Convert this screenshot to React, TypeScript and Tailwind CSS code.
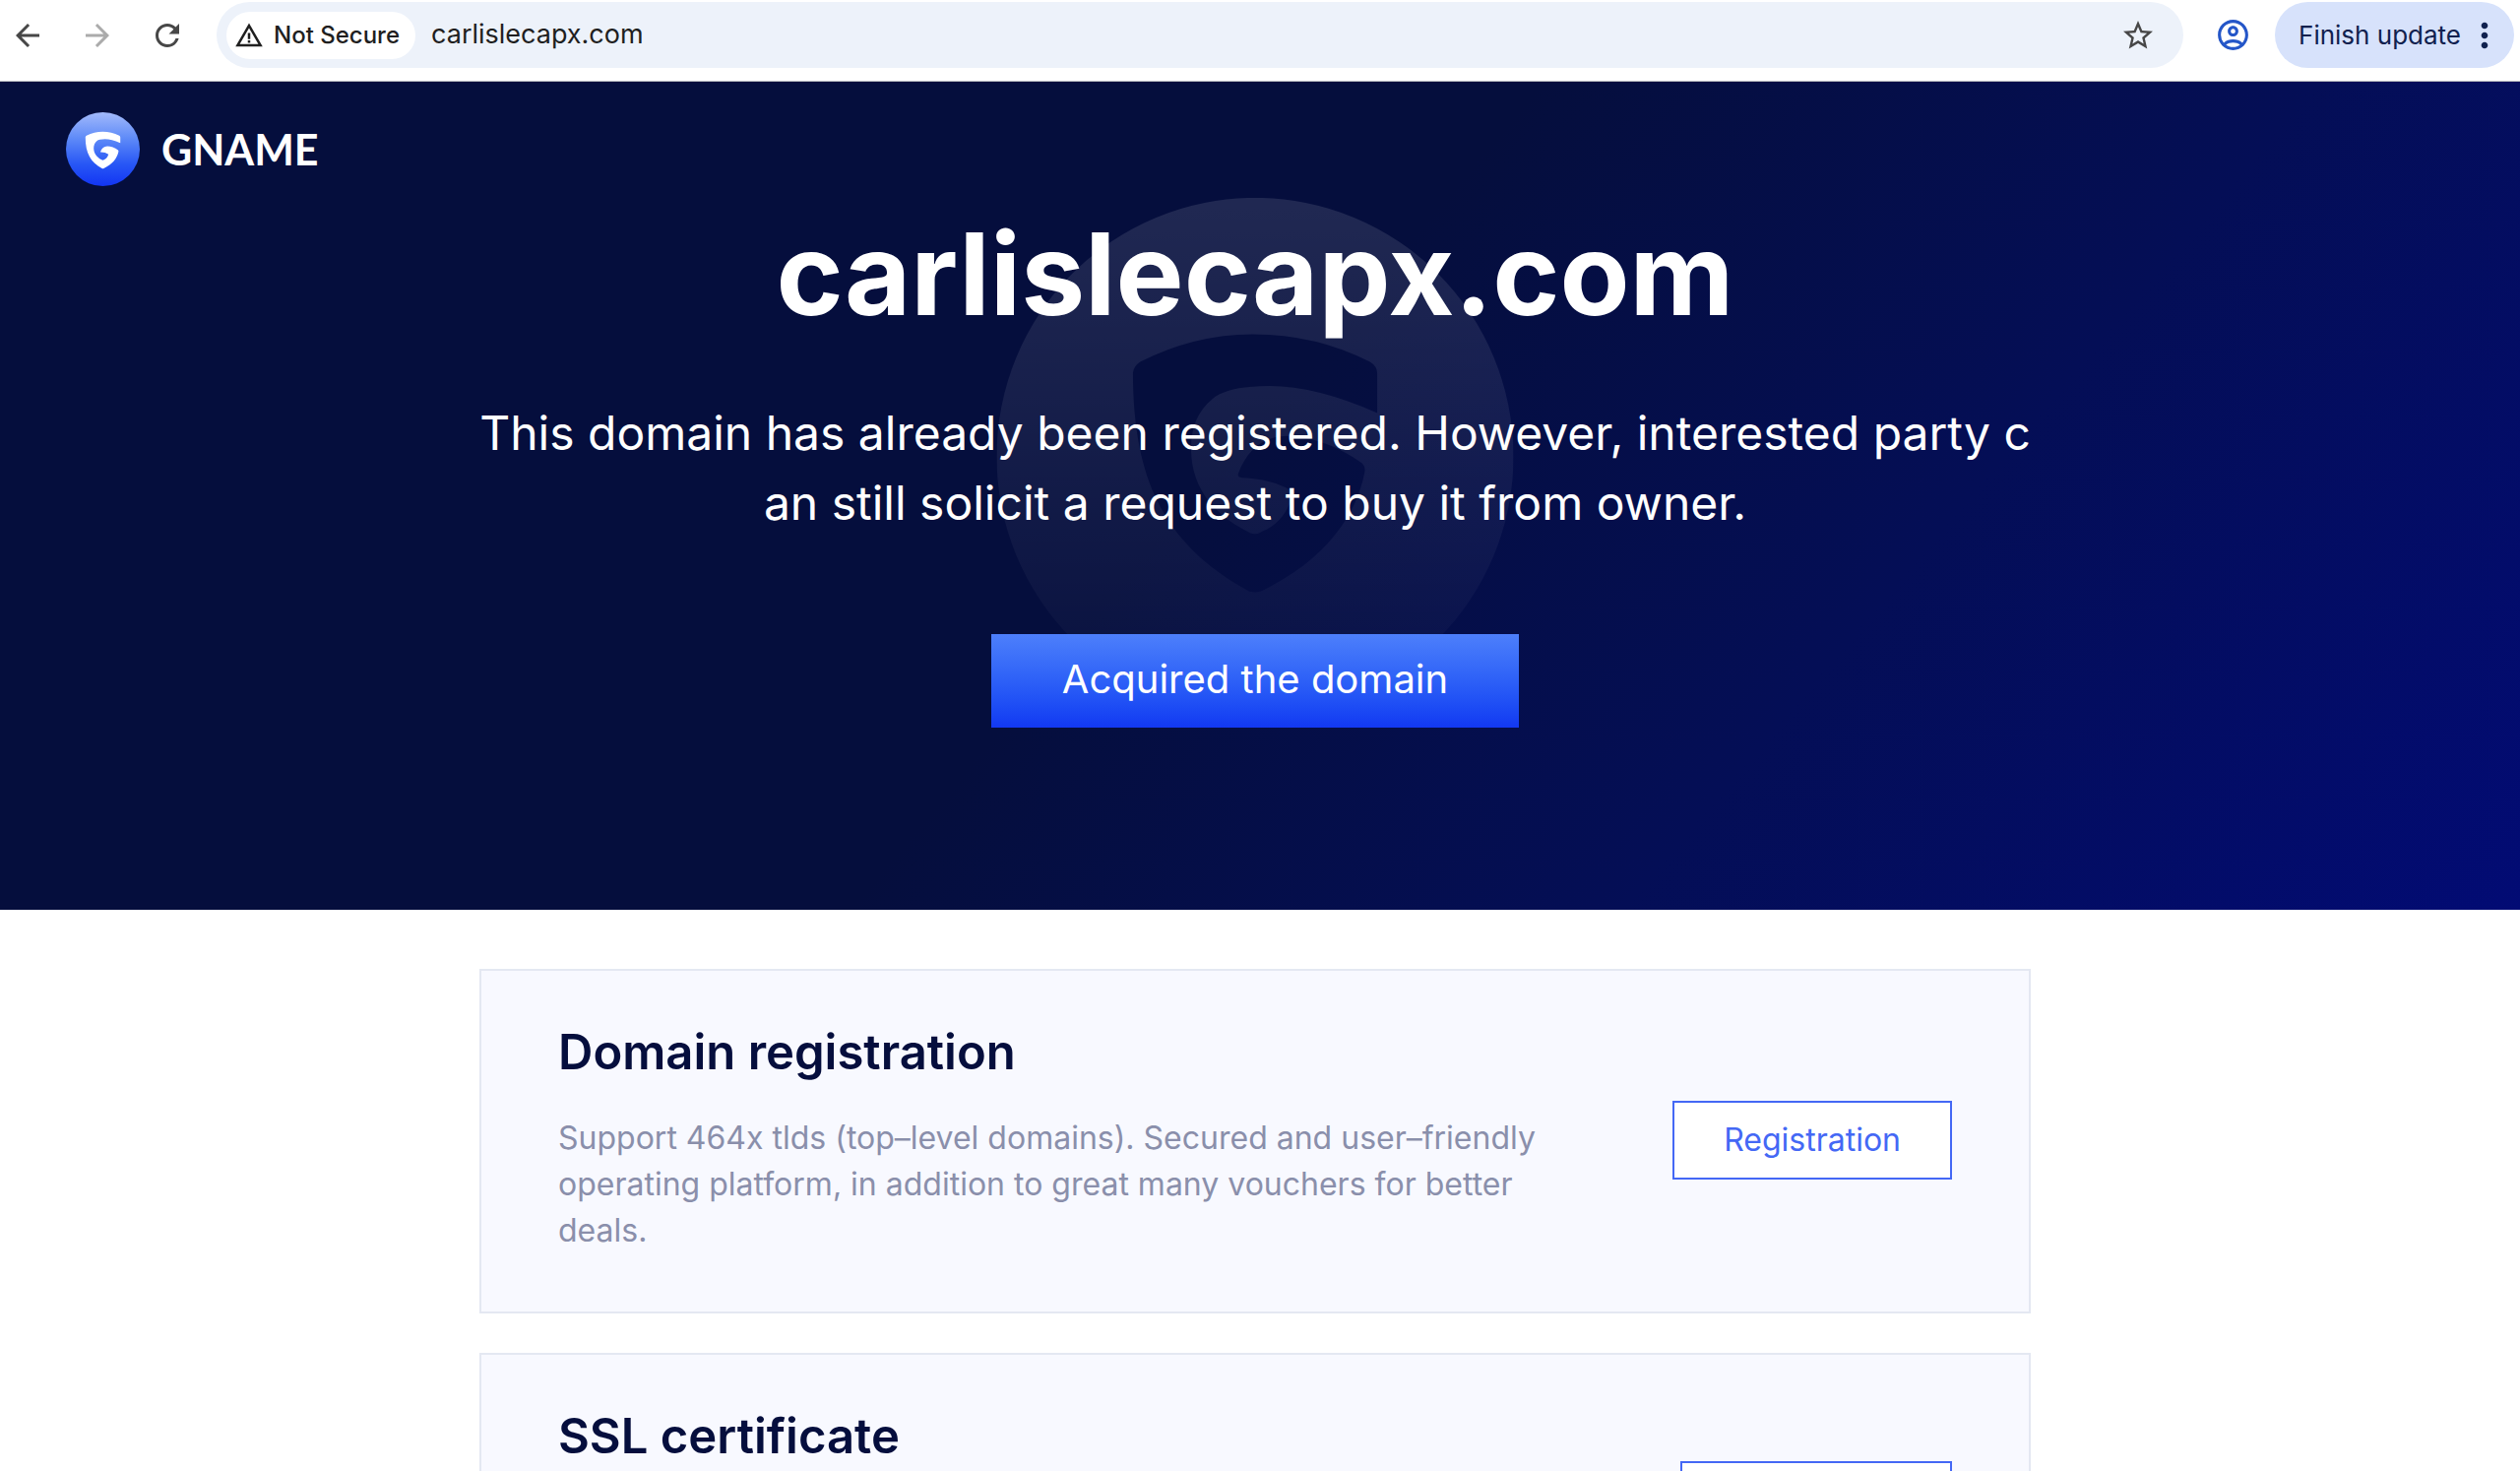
import { useId, useState } from "react";
import {
  MdArrowBack,
  MdArrowForward,
  MdMoreVert,
  MdOutlineAccountCircle,
  MdRefresh,
  MdStarBorder,
  MdWarningAmber,
} from "react-icons/md";

const DOMAIN = "carlislecapx.com";

const SERVICES = [
  {
    title: "Domain registration",
    text: "Support 464x tlds (top–level domains). Secured and user–friendly operating platform, in addition to great many vouchers for better deals.",
    action: "Registration",
  },
  {
    title: "SSL certificate",
    text: "Protect your website with trusted certificates and keep the data of your visitors encrypted.",
    action: "Certificate",
  },
];

const SHIELD =
  "M475 532Q640 448 820 448Q1010 448 1175 532Q1197 545 1197 568L1197 688Q1010 606 870 606Q740 606 695 645Q628 700 630 800C632 900 680 985 800 1048Q825 1064 848 1048C890 1030 920 1000 945 930Q880 888 785 885Q770 883 774 872C800 800 850 760 920 758C1000 760 1080 790 1150 840Q1163 852 1158 872C1130 1010 1030 1140 845 1230Q825 1238 805 1230C570 1100 453 920 453 565Q455 545 475 532Z";

function LogoMark() {
  const id = useId();

  return (
    <svg viewBox="38 33 1574 1574" className="size-[75px]" aria-hidden="true">
      <defs>
        <linearGradient id={id} x1="0" y1="0" x2="0" y2="1">
          <stop offset="0" stopColor="#a3bafb" />
          <stop offset="0.35" stopColor="#5f8bf8" />
          <stop offset="0.7" stopColor="#2857f5" />
          <stop offset="1" stopColor="#1235f3" />
        </linearGradient>
      </defs>
      <circle cx="825" cy="820" r="787" fill={`url(#${id})`} />
      <path d={SHIELD} fill="#fff" />
    </svg>
  );
}

function Watermark() {
  const id = useId();

  return (
    <svg
      viewBox="38 33 1574 1574"
      className="absolute -top-[19px] left-1/2 size-[525px] -translate-x-1/2"
      aria-hidden="true"
    >
      <defs>
        <linearGradient id={id} x1="0" y1="0" x2="0" y2="1">
          <stop offset="0" stopColor="#fff" stopOpacity="0.11" />
          <stop offset="1" stopColor="#fff" stopOpacity="0.01" />
        </linearGradient>
      </defs>
      <path
        fillRule="evenodd"
        fill={`url(#${id})`}
        d={`M38 820A787 787 0 1 1 1612 820A787 787 0 1 1 38 820Z${SHIELD}`}
      />
    </svg>
  );
}

function Toolbar() {
  const [url, setUrl] = useState(DOMAIN);

  return (
    <div className="flex items-center border-b border-[#b9bcc0] bg-white pt-0.5 pr-1.5 pb-[13px] pl-2.5 text-[#474747]">
      <div className="flex gap-[35px]">
        <button aria-label="Back">
          <MdArrowBack size={36} />
        </button>
        <button aria-label="Forward" className="text-[#ababab]">
          <MdArrowForward size={36} />
        </button>
        <button aria-label="Reload">
          <MdRefresh size={36} />
        </button>
      </div>

      <div className="ml-8 flex h-[67px] flex-1 items-center rounded-full bg-[#edf2fa] pr-7 pl-2.5 text-[#1f1f1f]">
        <button className="flex h-12 items-center gap-2.5 rounded-full bg-white pr-4 pl-2 text-2xl font-medium">
          <MdWarningAmber size={30} />
          Not Secure
        </button>
        <input
          aria-label="Address"
          className="ml-4 min-w-0 flex-1 bg-transparent text-[27px] outline-none"
          value={url}
          onChange={(e) => setUrl(e.target.value)}
        />
        <button aria-label="Bookmark" className="text-[#474747]">
          <MdStarBorder size={36} />
        </button>
      </div>

      <button aria-label="Profile" className="ml-8 text-[#2456c8]">
        <MdOutlineAccountCircle size={37} />
      </button>
      <button className="ml-6 flex h-[67px] items-center gap-1 rounded-full bg-[#d7e2fb] pr-2.5 pl-6 text-[26px] text-[#10214f]">
        Finish update
        <MdMoreVert size={40} />
      </button>
    </div>
  );
}

function Hero() {
  return (
    <header className="bg-[linear-gradient(130deg,#050e3d_48%,#040e56_72%,#020b74)] pt-[31px] pb-[185px] text-white">
      <a href="/" className="ml-[67px] inline-flex items-center gap-[22px] align-top">
        <LogoMark />
        <span className="font-['Lato',sans-serif] text-[43px] leading-none font-bold">GNAME</span>
      </a>

      <div className="relative mt-[31px] pr-2.5 text-center">
        <div className="relative mx-auto max-w-[1580px]">
          <Watermark />
          <h1 className="relative text-[116px] leading-none font-bold">{DOMAIN}</h1>
          <p className="relative mt-[68px] text-5xl leading-[71px] break-all">
            This domain has already been registered. However, interested party can still solicit a
            request to buy it from owner.
          </p>
          <button className="relative mt-[98px] h-[95px] w-[536px] bg-linear-to-b from-[#4d7ffb] to-[#1338f2] pb-1 align-top text-[40px]">
            Acquired the domain
          </button>
        </div>
      </div>
    </header>
  );
}

export default function App() {
  return (
    <div className="min-h-screen bg-white font-['Inter',sans-serif]">
      <Toolbar />
      <Hero />

      <main className="pt-[60px] pr-2.5">
        <div className="mx-auto flex max-w-[1576px] flex-col gap-10">
          {SERVICES.map((service) => (
            <section
              key={service.title}
              className="flex items-center gap-20 border-2 border-[#e4e8f2] bg-[#f8f9ff] px-[78px] pt-14 pb-[59px]"
            >
              <div className="flex-1">
                <h2 className="text-[49px] leading-[54px] font-semibold text-[#050e3d]">
                  {service.title}
                </h2>
                <p className="mt-9 text-[32px] leading-[47px] text-[#8a8fab]">{service.text}</p>
              </div>
              <button className="h-20 min-w-[276px] border-2 border-[#4468f5] bg-white px-[50px] text-[32px] text-[#4468f5]">
                {service.action}
              </button>
            </section>
          ))}
        </div>
      </main>
    </div>
  );
}
